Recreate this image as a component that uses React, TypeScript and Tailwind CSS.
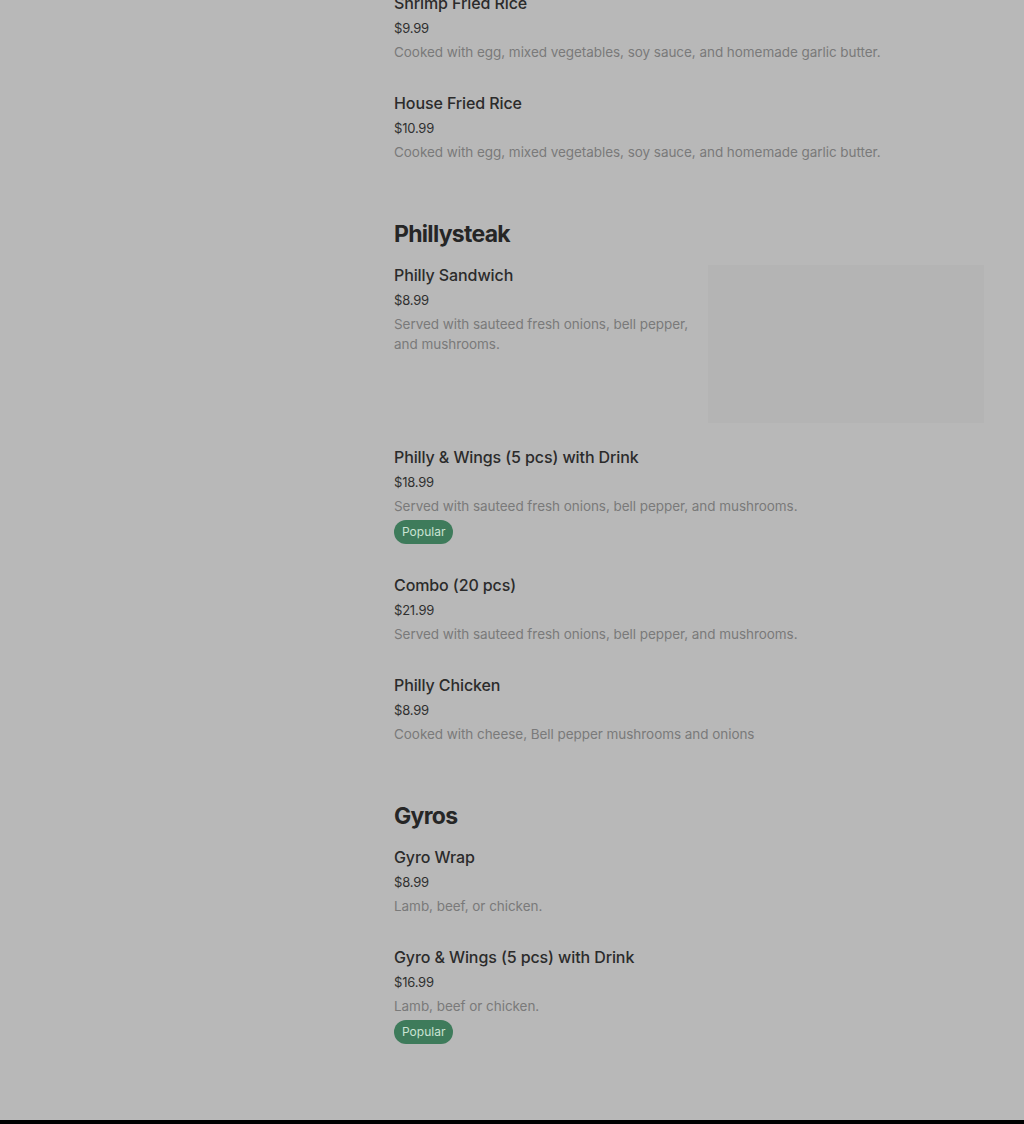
type Item = {
  name: string;
  price: string;
  desc: string;
  popular?: boolean;
  image?: boolean;
};

type Section = { title?: string; items: Item[] };

const FRIED =
  "Cooked with egg, mixed vegetables, soy sauce, and homemade garlic butter.";
const PHILLY = "Served with sauteed fresh onions, bell pepper, and mushrooms.";

const sections: Section[] = [
  {
    items: [
      { name: "Shrimp Fried Rice", price: "$9.99", desc: FRIED },
      { name: "House Fried Rice", price: "$10.99", desc: FRIED },
    ],
  },
  {
    title: "Phillysteak",
    items: [
      { name: "Philly Sandwich", price: "$8.99", desc: PHILLY, image: true },
      { name: "Philly & Wings (5 pcs) with Drink", price: "$18.99", desc: PHILLY, popular: true },
      { name: "Combo (20 pcs)", price: "$21.99", desc: PHILLY },
      { name: "Philly Chicken", price: "$8.99", desc: "Cooked with cheese, Bell pepper mushrooms and onions" },
    ],
  },
  {
    title: "Gyros",
    items: [
      { name: "Gyro Wrap", price: "$8.99", desc: "Lamb, beef, or chicken." },
      { name: "Gyro & Wings (5 pcs) with Drink", price: "$16.99", desc: "Lamb, beef or chicken.", popular: true },
    ],
  },
];

function MenuItem({ item }: { item: Item }) {
  return (
    <div className="flex gap-4">
      <div className={item.image ? "w-[298px] shrink-0" : "flex-1"}>
        <h3 className="text-[16px] font-medium leading-6 tracking-[-0.1px] text-[#2b2b2b]">{item.name}</h3>
        <p className="mt-[1px] text-[13px] leading-6 tracking-[-0.2px] text-[#303030]">{item.price}</p>
        <p className="pt-[2px] text-[13.5px] leading-5 tracking-[-0.05px] text-[#7a7a7a]">{item.desc}</p>
        {item.popular && (
          <span className="mt-[4px] inline-flex h-6 items-center rounded-[12px] bg-[#3e7b5b] px-2 text-[12px] text-[#cbe3d3]">
            Popular
          </span>
        )}
      </div>
      {item.image && (
        <div className="mt-[2px] mb-[-7px] h-[158px] w-[276px] shrink-0 bg-[#b4b4b4]" />
      )}
    </div>
  );
}

export default function App() {
  return (
    <div
      className="flex h-[1124px] flex-col overflow-hidden bg-[#b8b8b8]"
      style={{ fontFamily: "Inter, 'Noto Sans', sans-serif" }}
    >
      <main className="flex-1 pl-[394px] pr-10">
        <div className="mt-[-9px] flex flex-col gap-[56px]">
          {sections.map((s, i) => (
            <section key={i} className="flex flex-col">
              {s.title && (
                <h2 className="mb-[13px] text-[23px] font-bold leading-8 tracking-[-0.7px] text-[#262626]">
                  {s.title}
                </h2>
              )}
              <div className="flex flex-col gap-[29px]">
                {s.items.map((it) => (
                  <MenuItem key={it.name} item={it} />
                ))}
              </div>
            </section>
          ))}
        </div>
      </main>
      <footer className="h-1 shrink-0 bg-black" />
    </div>
  );
}
